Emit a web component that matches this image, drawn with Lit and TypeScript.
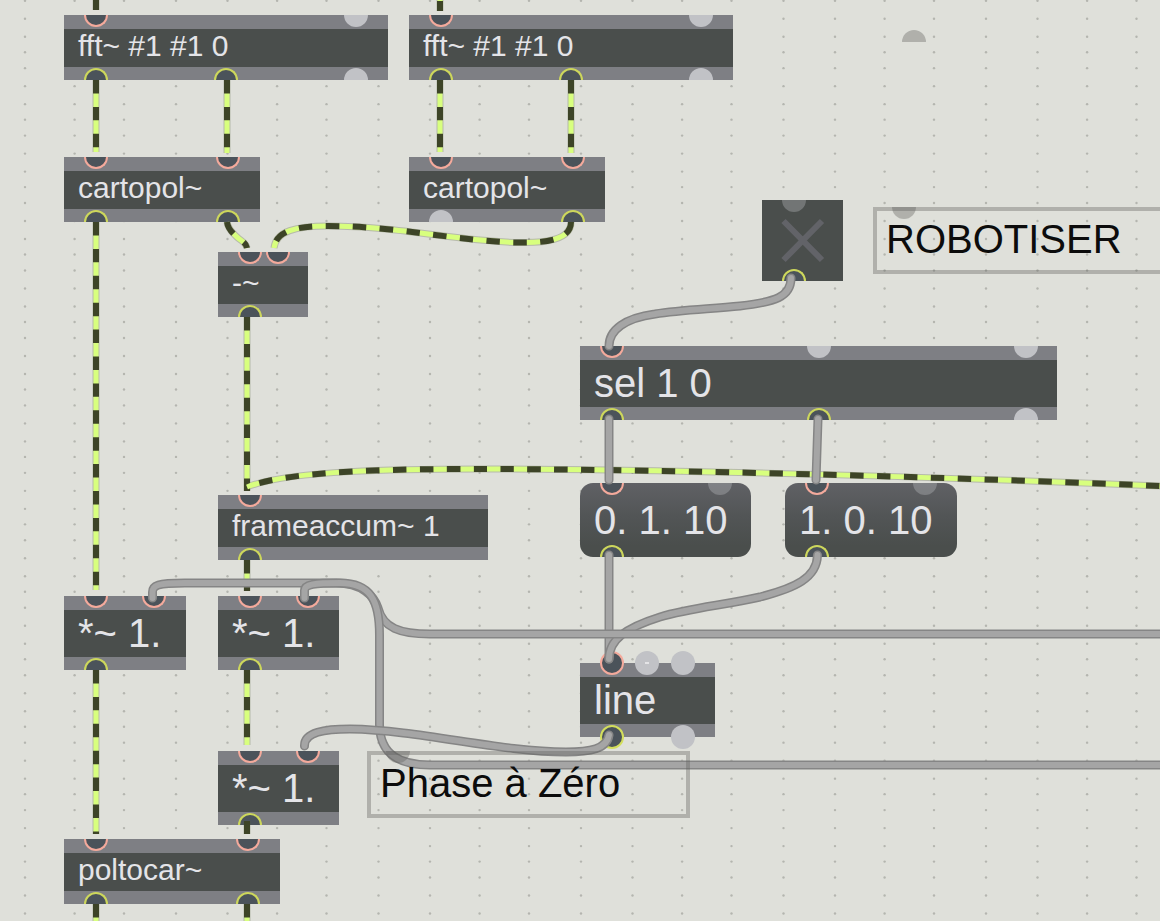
import { LitElement, html, svg, css, nothing } from "lit";
import { customElement } from "lit/decorators.js";
import { classMap } from "lit/directives/class-map.js";
import { styleMap } from "lit/directives/style-map.js";

interface Port {
  x: number;
  kind: "in" | "out" | "idle" | "hot";
}

interface PatchNode {
  id: string;
  kind: "object" | "message";
  x: number;
  y: number;
  w: number;
  text: string;
  large?: boolean;
  round?: boolean;
  inlets: Port[];
  outlets: Port[];
}

const inlet = (x: number): Port => ({ x, kind: "in" });
const outlet = (x: number): Port => ({ x, kind: "out" });
const idle = (x: number): Port => ({ x, kind: "idle" });

const NODES: PatchNode[] = [
  { id: "fft-a", kind: "object", x: 64, y: 15, w: 324, text: "fft~ #1 #1 0", inlets: [inlet(32), idle(292)], outlets: [outlet(32), outlet(162), idle(292)] },
  { id: "fft-b", kind: "object", x: 409, y: 15, w: 324, text: "fft~ #1 #1 0", inlets: [inlet(32), idle(292)], outlets: [outlet(32), outlet(162), idle(292)] },
  { id: "pol-a", kind: "object", x: 64, y: 157, w: 196, text: "cartopol~", inlets: [inlet(32), inlet(164)], outlets: [outlet(32), outlet(164)] },
  { id: "pol-b", kind: "object", x: 409, y: 157, w: 196, text: "cartopol~", inlets: [inlet(32), inlet(164)], outlets: [idle(32), outlet(164)] },
  { id: "minus", kind: "object", x: 218, y: 252, w: 90, text: "-~", inlets: [inlet(32), inlet(60)], outlets: [outlet(32)] },
  { id: "frame", kind: "object", x: 218, y: 495, w: 270, text: "frameaccum~ 1", inlets: [inlet(32)], outlets: [outlet(32)] },
  { id: "mul-a", kind: "object", large: true, x: 64, y: 596, w: 122, text: "*~ 1.", inlets: [inlet(32), inlet(90)], outlets: [outlet(32)] },
  { id: "mul-b", kind: "object", large: true, x: 218, y: 596, w: 121, text: "*~ 1.", inlets: [inlet(32), inlet(90)], outlets: [outlet(32)] },
  { id: "mul-c", kind: "object", large: true, x: 218, y: 751, w: 121, text: "*~ 1.", inlets: [inlet(32), inlet(90)], outlets: [outlet(32)] },
  { id: "car", kind: "object", x: 64, y: 839, w: 216, text: "poltocar~", inlets: [inlet(32), inlet(184)], outlets: [outlet(32), outlet(184)] },
  { id: "sel", kind: "object", large: true, x: 580, y: 346, w: 477, text: "sel 1 0", inlets: [inlet(32), idle(239), idle(446)], outlets: [outlet(32), outlet(239), idle(446)] },
  { id: "msg-a", kind: "message", large: true, x: 580, y: 483, w: 171, text: "0. 1. 10", inlets: [inlet(32), idle(140)], outlets: [outlet(32)] },
  { id: "msg-b", kind: "message", large: true, x: 785, y: 483, w: 172, text: "1. 0. 10", inlets: [inlet(32), idle(140)], outlets: [outlet(32)] },
  { id: "line", kind: "object", large: true, round: true, x: 580, y: 663, w: 135, text: "line", inlets: [inlet(32), { x: 67, kind: "hot" }, idle(103)], outlets: [outlet(32), idle(103)] },
];

const SIGNALS: { d: string; shift?: number }[] = [
  { d: "M96 -17 V10", shift: -17 },
  { d: "M440 -12 V11", shift: -13 },
  { d: "M96 80 V152" },
  { d: "M227 80 V153" },
  { d: "M440 80 V152" },
  { d: "M571 80 V153" },
  { d: "M96 222 V590" },
  { d: "M227 222 C228 230 234 234 238 238 C243 242 246 243 247 248" },
  { d: "M571 222 C571 240 545 243 520 242.5 C460 242 400 226 328 226 C296 226 276 231 274 248" },
  { d: "M247 317 V491" },
  { d: "M247 487 C290 470 400 469 480 469 C620 469 900 475 1160 486 L2400 538", shift: -13 },
  { d: "M247 560 V591" },
  { d: "M96 670 V834" },
  { d: "M247 670 V745" },
  { d: "M247 821 V834" },
  { d: "M96 904 V1000" },
  { d: "M247 904 V1000" },
];

const CORDS: string[] = [
  "M791 278 C791 297 775 302 740 306 C710 309 680 310 655 314 C625 318 609 330 609 346",
  "M609 419 V480",
  "M818 419 L816 480",
  "M609 555 V659",
  "M817.5 555 C817 578 795 588 760 597 C725 605 690 608 660 617 C625 628 609 640 609 659",
  "M152.5 598 V593 C152 585 158 583 185 583 H336 C362 583 374 596 378 608 C383 628 400 634 430 634 H2400",
  "M304.5 598 V591 C304 584 315 583 340 583 C370 583 379.5 600 379.5 635 V725 C380 755 400 765 430 765 H2400",
  "M609 735 C607 749 590 752 566 752 C500 752 420 730 350 729 C325 729 304 732 304.5 746",
];

const gridLine = (start: number, period: number, steps: number[], end: number): number[] => {
  const out: number[] = [];
  for (let k = 0; start + k * period < end; k++) {
    for (const s of steps) out.push(start + k * period + s);
  }
  return out;
};
const GRID_X = gridLine(25, 202.5, [0, 49.6, 99, 151], 2400);
const GRID_Y = gridLine(0.7, 67.45, [0, 18, 36, 51.5], 1600);

@customElement("app-root")
export class AppRoot extends LitElement {
  static styles = css`
    :host {
      display: block;
      font-family: "Liberation Sans", Arial, sans-serif;
    }
    .patcher {
      position: relative;
      width: 100%;
      height: 100vh;
      overflow: hidden;
      background: #dfe0da;
    }
    .layer {
      position: absolute;
      inset: 0;
      width: 100%;
      height: 100%;
      pointer-events: none;
    }
    .dot {
      fill: #b4b5af;
    }
    .halo {
      fill: none;
      stroke: rgba(90, 100, 60, 0.3);
      stroke-width: 7;
    }
    .signal {
      fill: none;
      stroke: #d8ff7e;
      stroke-width: 5;
    }
    .pulse {
      fill: none;
      stroke: #3d4427;
      stroke-width: 6;
      stroke-dasharray: 13.45 13.45;
    }
    .edge {
      fill: none;
      stroke: #858585;
      stroke-width: 9;
      stroke-linecap: round;
    }
    .core {
      fill: none;
      stroke: #a5a5a5;
      stroke-width: 6;
      stroke-linecap: round;
    }
    .node {
      position: absolute;
      box-sizing: border-box;
      display: block;
      margin: 0;
      padding: 14px 14px 18px;
      border: 0;
      background: linear-gradient(#7e7f84 14px, #4a4e4c 14px, #4a4e4c calc(100% - 13px), #7e7f84 calc(100% - 13px));
      color: #e4e4e8;
      font-family: inherit;
      font-size: 30px;
      line-height: 33px;
      text-align: left;
      white-space: pre;
    }
    .large {
      padding: 14px 14px 13px;
      font-size: 40px;
      line-height: 47px;
    }
    .message {
      border-radius: 13px;
      background: linear-gradient(#606165, #525556 45%, #4a4e4c 85%);
    }
    .port {
      position: absolute;
      box-sizing: border-box;
      width: 24px;
      height: 12px;
      margin-left: -12px;
      border: 2px solid #f4aa9c;
      background: #4b535a;
    }
    .port.top {
      top: 0;
      border-top: 0;
      border-radius: 0 0 12px 12px;
    }
    .port.bottom {
      bottom: 0;
      border-color: #cdd75c;
      border-bottom: 0;
      border-radius: 12px 12px 0 0;
    }
    .port.idle {
      border: 0;
      background: #c1c2c6;
    }
    .message .port.idle,
    .toggle .port.idle {
      background: rgba(190, 192, 196, 0.35);
    }
    .note .port.idle,
    .port.loose {
      border: 0;
      background: rgba(96, 96, 92, 0.37);
    }
    .round .port {
      height: 24px;
      border: 2px solid #f4aa9c;
      border-radius: 12px;
    }
    .round .port.top {
      top: -12px;
    }
    .round .port.bottom {
      bottom: -12px;
      border-color: #d3de5c;
    }
    .round .port.idle {
      border: 0;
    }
    .round .port.hot::after {
      content: "";
      position: absolute;
      inset: 11px 10px;
      background: #e4e4e6;
    }
    .toggle {
      position: absolute;
      width: 81px;
      height: 81px;
      background: #4a4e4c;
    }
    .check {
      position: absolute;
      inset: 0;
      width: 100%;
      height: 100%;
      margin: 0;
      appearance: none;
    }
    .cross {
      fill: none;
      stroke: #626368;
      stroke-width: 6;
    }
    .check:checked + .cross-box .cross {
      stroke: #e4e4e8;
    }
    .note {
      position: absolute;
      box-sizing: border-box;
      display: block;
      width: 323px;
      padding: 6px 9px 8px;
      border: 4px solid rgba(96, 96, 92, 0.37);
      color: #0c0c0c;
      font-size: 40px;
      line-height: 45px;
      white-space: pre;
    }
    .note .port.top {
      top: -4px;
    }
  `;

  private port(p: Port, side: "top" | "bottom") {
    return html`<span
      class=${classMap({ port: true, [side]: true, idle: p.kind === "idle" || p.kind === "hot", hot: p.kind === "hot" })}
      style=${styleMap({ left: `${p.x}px` })}
    ></span>`;
  }

  private node(n: PatchNode) {
    const classes = classMap({ node: true, [n.kind]: true, large: !!n.large, round: !!n.round });
    const place = styleMap({ left: `${n.x}px`, top: `${n.y}px`, width: `${n.w}px` });
    const body = html`${n.text}${n.inlets.map((p) => this.port(p, "top"))}${n.outlets.map((p) => this.port(p, "bottom"))}`;
    return n.kind === "message"
      ? html`<button type="button" class=${classes} style=${place}>${body}</button>`
      : html`<div class=${classes} style=${place}>${body}</div>`;
  }

  private note(text: string, x: number, y: number, portX: number, target?: string) {
    const place = styleMap({ left: `${x}px`, top: `${y}px` });
    const body = html`${text}${this.port(idle(portX), "top")}`;
    return target
      ? html`<label class="note" for=${target} style=${place}>${body}</label>`
      : html`<div class="note" style=${place}>${body}</div>`;
  }

  render() {
    return html`
      <main class="patcher">
        <svg class="layer" aria-hidden="true">
          ${GRID_X.map((x) => GRID_Y.map((y) => svg`<circle class="dot" cx=${x} cy=${y} r="1.2" />`))}
        </svg>
        ${NODES.map((n) => this.node(n))}
        <div class="toggle" style=${styleMap({ left: "762px", top: "200px" })}>
          <input class="check" type="checkbox" id="robot" />
          <svg class="layer cross-box" viewBox="0 0 81 81" aria-hidden="true">
            <path class="cross" d="M21.500 21 L60 60 M60 21 L21.500 60" />
          </svg>
          ${this.port(idle(32), "top")}${this.port(outlet(32), "bottom")}
        </div>
        <span class="port loose bottom" style=${styleMap({ left: "914px", top: "30px" })}></span>
        <svg class="layer" aria-hidden="true">
          ${SIGNALS.map(
            (s) => svg`
              <path class="halo" d=${s.d} />
              <path class="signal" d=${s.d} />
              <path class="pulse" d=${s.d} stroke-dashoffset=${s.shift ?? nothing} />`
          )}
          ${CORDS.map((d) => svg`<path class="edge" d=${d} /><path class="core" d=${d} />`)}
        </svg>
        ${this.note("ROBOTISER", 873, 207, 27, "robot")} ${this.note("Phase à Zéro", 367, 751, 27)}
      </main>
    `;
  }
}
